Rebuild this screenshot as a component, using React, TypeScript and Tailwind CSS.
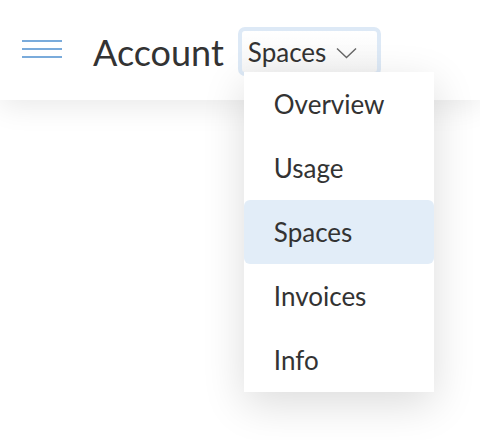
import React from "react";

const items = ["Overview", "Usage", "Spaces", "Invoices", "Info"];

export default function App() {
  return (
    <div
      className="relative w-[480px] h-[440px] overflow-hidden bg-white text-[#333333]"
      style={{ fontFamily: "Lato, 'Open Sans', sans-serif" }}
    >
      <header className="relative z-10 flex h-[100px] items-center bg-white shadow-[0_6px_28px_rgba(0,0,0,0.09)]">
        <button className="ml-[22px] flex w-[40px] flex-col gap-[6px] mt-[-3px]">
          <span className="block h-[2px] w-full bg-[#7aabdb]" />
          <span className="block h-[2px] w-full bg-[#7aabdb]" />
          <span className="block h-[2px] w-full bg-[#7aabdb]" />
        </button>
        <h1 className="ml-[31px] mt-[3px] text-[36px] leading-none font-normal">Account</h1>
        <div className="relative ml-[14px] mt-[3px]">
          <button className="flex h-[49px] items-center gap-[10px] rounded-[7px] border-[4px] border-[#dde9f6] bg-gradient-to-b from-white to-[#f6f6f6] pl-[6px] pr-[20px] text-[26px] leading-none">
            <span>Spaces</span>
            <svg width="21" height="12" viewBox="0 0 21 12" fill="none" className="mt-[3px]">
              <path d="M1 1.5 L10.5 10.5 L20 1.5" stroke="#666" strokeWidth="1.4" />
            </svg>
          </button>
          <ul className="absolute left-[6px] top-[45px] w-[190px] bg-white shadow-[0_12px_40px_rgba(0,0,0,0.14)]">
            {items.map((it) => (
              <li
                key={it}
                className={
                  "flex h-[64px] items-center pl-[30px] text-[26px] " +
                  (it === "Spaces" ? "rounded-[6px] bg-[#e2edf8]" : "")
                }
              >
                {it}
              </li>
            ))}
          </ul>
        </div>
      </header>
    </div>
  );
}
